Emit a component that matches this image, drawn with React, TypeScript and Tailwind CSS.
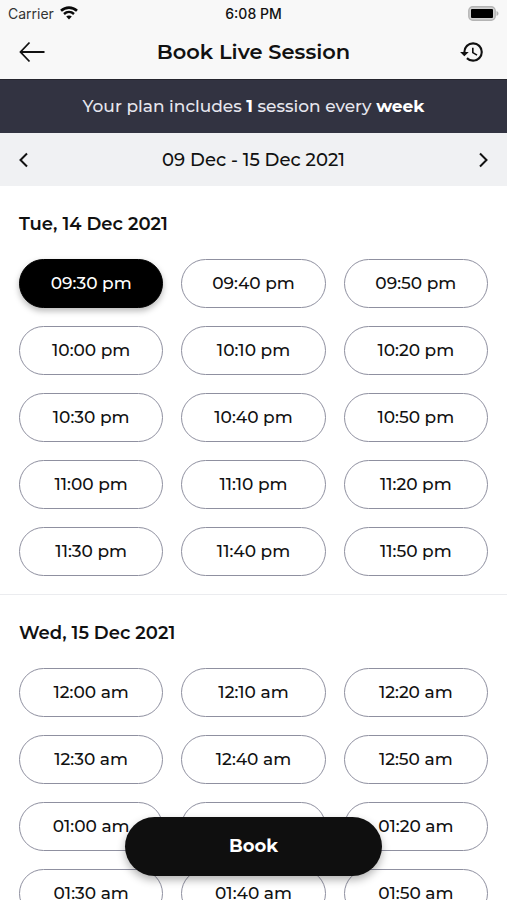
import { useState } from 'react'
import { MdHistory } from 'react-icons/md'
import { clsx } from 'clsx'

interface DaySlots {
  title: string
  slots: string[]
}

const days: DaySlots[] = [
  {
    title: 'Tue, 14 Dec 2021',
    slots: [
      '09:30 pm', '09:40 pm', '09:50 pm',
      '10:00 pm', '10:10 pm', '10:20 pm',
      '10:30 pm', '10:40 pm', '10:50 pm',
      '11:00 pm', '11:10 pm', '11:20 pm',
      '11:30 pm', '11:40 pm', '11:50 pm',
    ],
  },
  {
    title: 'Wed, 15 Dec 2021',
    slots: [
      '12:00 am', '12:10 am', '12:20 am',
      '12:30 am', '12:40 am', '12:50 am',
      '01:00 am', '01:10 am', '01:20 am',
      '01:30 am', '01:40 am', '01:50 am',
    ],
  },
]

function WifiIcon() {
  return (
    <svg width="18" height="14" viewBox="0 0 18 14" fill="none" aria-hidden>
      <path d="M1 4.8C5.6.5 12.4.5 17 4.8" stroke="#0a0a0a" strokeWidth="2.6" />
      <path d="M4 8C6.9 5.3 11.1 5.3 14 8" stroke="#0a0a0a" strokeWidth="2.4" />
      <path d="M9 13.4 6.2 10.6C7.8 9.2 10.2 9.2 11.8 10.6Z" fill="#0a0a0a" />
    </svg>
  )
}

function BatteryIcon() {
  return (
    <svg width="31" height="15" viewBox="0 0 31 15" fill="none" aria-hidden>
      <rect x="0.8" y="0.8" width="26.4" height="13.4" rx="4" fill="#d2d2d2" stroke="#b4b4b4" strokeWidth="1.4" />
      <rect x="3" y="3" width="22" height="9" rx="1" fill="#000" />
      <path d="M28.5 5v5c1.2-.4 2-1.4 2-2.5s-.8-2.1-2-2.5Z" fill="#b4b4b4" />
    </svg>
  )
}

function BackIcon() {
  return (
    <svg width="29" height="22" viewBox="0 0 29 22" fill="none" aria-hidden>
      <path d="M10.5 1.5 1.5 11l9 9.5M2 11h23.5" stroke="#111" strokeWidth="1.8" />
    </svg>
  )
}

function Chevron({ flip }: { flip?: boolean }) {
  return (
    <svg width="10" height="16" viewBox="0 0 10 16" fill="none" aria-hidden className={clsx(flip && 'rotate-180')}>
      <path d="M9 1.5 2.5 8 9 14.5" stroke="#111" strokeWidth="2" />
    </svg>
  )
}

export default function App() {
  const [selected, setSelected] = useState('09:30 pm')

  return (
    <div className="relative flex h-screen flex-col overflow-hidden bg-white font-['Montserrat','Inter',sans-serif] font-medium text-[#111]">
      {/* Status bar + title */}
      <header className="bg-[#f8f8f8] pb-px">
        <div className="grid h-[26px] grid-cols-3 items-center px-2 text-[14px] font-['Inter',sans-serif]">
          <div className="flex items-center gap-1.5 font-normal text-[#333]">
            <span>Carrier</span>
            <WifiIcon />
          </div>
          <span className="text-center">6:08 PM</span>
          <div className="flex justify-end">
            <BatteryIcon />
          </div>
        </div>
        <div className="flex h-[52px] items-center justify-between pr-[22px] pl-[19px]">
          <button type="button" aria-label="Back">
            <BackIcon />
          </button>
          <h1 className="text-[21px] leading-6 font-semibold">Book Live Session</h1>
          <button type="button" aria-label="History">
            <MdHistory size={26} />
          </button>
        </div>
      </header>

      {/* Plan banner */}
      <p className="border-t border-[#26262e] bg-[#323341] py-[15px] text-center text-[17px] leading-[23px] text-[#e6e6ee]">
        Your plan includes <strong className="font-bold text-white">1</strong> session every{' '}
        <strong className="font-bold text-white">week</strong>
      </p>

      {/* Week switcher */}
      <div className="flex h-[53px] items-center justify-between bg-[#f0f1f3] px-[18px]">
        <button type="button" aria-label="Previous week">
          <Chevron />
        </button>
        <span className="text-[18px] leading-6">09 Dec - 15 Dec 2021</span>
        <button type="button" aria-label="Next week">
          <Chevron flip />
        </button>
      </div>

      {/* Slots */}
      <main className="min-h-0 flex-1 overflow-y-auto [scrollbar-width:none]">
        {days.map((day) => (
          <section key={day.title} className="border-b border-[#ebecef] px-[19px] pt-[25px] pb-[18px]">
            <h2 className="mb-[22px] text-[18px] leading-[26px] font-semibold">{day.title}</h2>
            <div className="grid grid-cols-3 gap-[18px]">
              {day.slots.map((slot) => (
                <button
                  key={slot}
                  type="button"
                  aria-pressed={slot === selected}
                  onClick={() => setSelected(slot)}
                  className={clsx(
                    'h-[49px] rounded-full border text-[17px]',
                    slot === selected
                      ? 'border-black bg-black text-white shadow-[0_3px_6px_rgba(0,0,0,0.28)]'
                      : 'border-[#8f90a0] bg-white',
                  )}
                >
                  {slot}
                </button>
              ))}
            </div>
          </section>
        ))}
      </main>

      {/* Floating action */}
      <div className="pointer-events-none absolute inset-x-0 bottom-6 flex justify-center">
        <button
          type="button"
          className="pointer-events-auto h-[59px] w-[257px] rounded-full bg-[#0f0f0f] text-[18px] font-bold text-white shadow-[0_4px_8px_rgba(0,0,0,0.3)]"
        >
          Book
        </button>
      </div>
    </div>
  )
}
